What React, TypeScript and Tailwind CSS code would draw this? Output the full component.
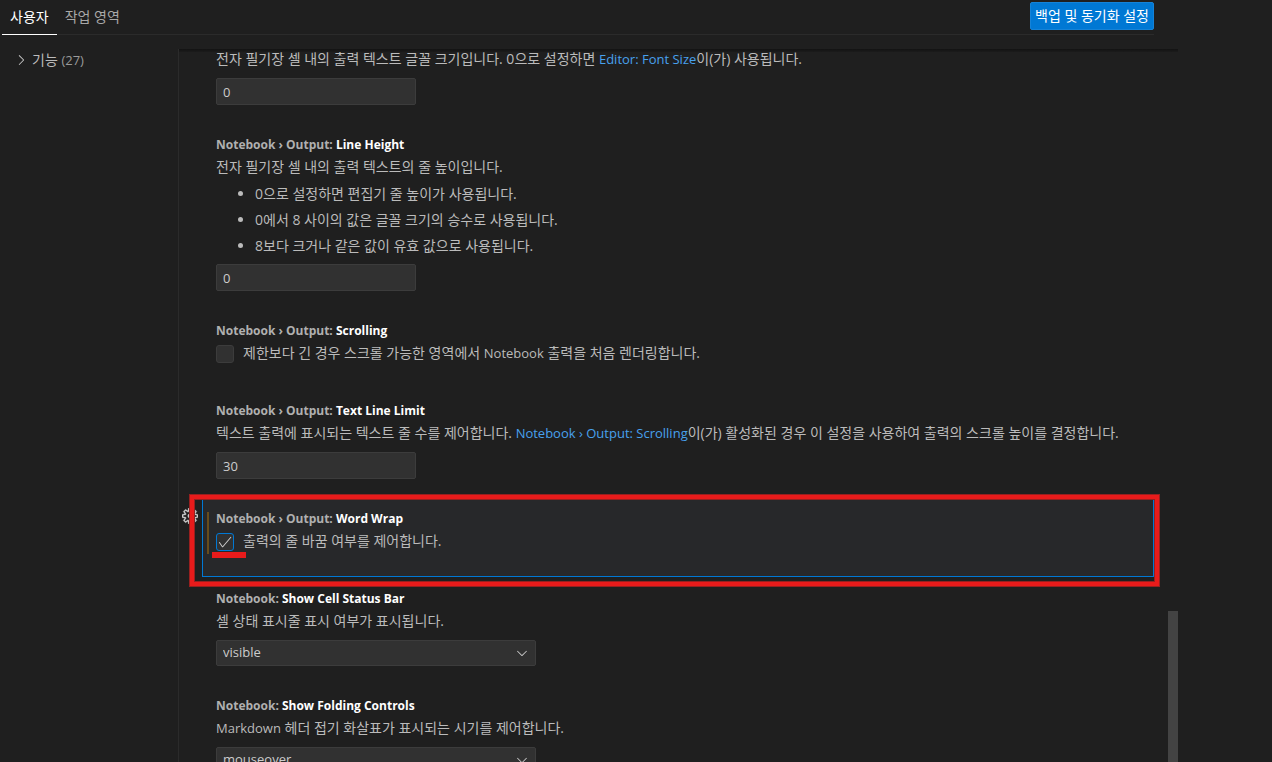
import type { ReactNode } from "react";
import { VscCheck, VscChevronDown, VscChevronRight, VscSettingsGear } from "react-icons/vsc";

type ItemProps = {
  id: string;
  category?: string;
  name?: string;
  children: ReactNode;
  focused?: boolean;
};

function Item({ id, category, name, children, focused }: ItemProps) {
  return (
    <section
      className={
        focused
          ? "relative mb-px bg-[#27282a] px-3.5 pt-3 pb-[18px] outline-1 -outline-offset-1 outline-[#0078d4]"
          : "relative mb-px px-3.5 pt-3 pb-[18px]"
      }
    >
      {focused && (
        <>
          <button
            type="button"
            aria-label="추가 작업"
            className="absolute top-2.5 -left-5 text-[#cccccc]"
          >
            <VscSettingsGear className="size-4" stroke="currentColor" strokeWidth={0.4} />
          </button>
          <span className="absolute top-3.5 left-[5px] h-[42px] w-0.5 bg-[#664c1c]" />
        </>
      )}
      <h2 className="text-[12px] leading-[18px] font-bold whitespace-pre text-[#b0b0b0]">
        <label htmlFor={id}>
          {category} <span className="text-white">{name}</span>
        </label>
      </h2>
      {children}
      {focused && (
        <>
          <span className="pointer-events-none absolute -top-[3px] -right-[5px] -bottom-[9px] -left-3 border-4 border-[#e81b1b] shadow-[0_0_0_1px_#97201f,inset_0_0_0_1px_#97201f]" />
          <span className="absolute top-[54px] left-2.5 h-1.5 w-[34px] bg-[#e81b1b]" />
        </>
      )}
    </section>
  );
}

function Description({ children }: { children: ReactNode }) {
  return <p className="mt-1 text-[14px] leading-[18px]">{children}</p>;
}

function SettingLink({ children }: { children: ReactNode }) {
  return (
    <a href="#" className="text-[13px] text-[#48a1ee]">
      {children}
    </a>
  );
}

function NumberBox({ id, value }: { id: string; value: string }) {
  return (
    <input
      id={id}
      type="text"
      aria-label={id}
      defaultValue={value}
      className="mt-2.5 block h-[27px] w-[200px] rounded-xs border border-[#3c3c3c] bg-[#313131] px-1.5 text-[13px] text-[#cccccc] outline-none"
    />
  );
}

function CheckRow({ id, checked, children }: { id: string; checked?: boolean; children: ReactNode }) {
  return (
    <div className="mt-1 mb-[9px] flex h-[18px] gap-[9px]">
      <span className="mt-px grid size-[18px] shrink-0">
        <input
          id={id}
          type="checkbox"
          defaultChecked={checked}
          className="col-start-1 row-start-1 size-[18px] appearance-none rounded-[3px] border border-[#3c3c3c] bg-[#313131] checked:border-[#0078d4]"
        />
        {checked && (
          <VscCheck className="pointer-events-none col-start-1 row-start-1 size-4 place-self-center text-[#cccccc]" />
        )}
      </span>
      <label htmlFor={id} className="text-[14px] leading-[18px]">
        {children}
      </label>
    </div>
  );
}

function SelectBox({ id, options }: { id: string; options: string[] }) {
  return (
    <div className="mt-2.5 grid w-[320px]">
      <select
        id={id}
        className="col-start-1 row-start-1 h-[26px] appearance-none rounded-xs border border-[#3c3c3c] bg-[#313131] px-1.5 text-[13px] text-[#cccccc] outline-none"
      >
        {options.map((o) => (
          <option key={o}>{o}</option>
        ))}
      </select>
      <VscChevronDown className="pointer-events-none col-start-1 row-start-1 mr-1.5 size-4 self-center justify-self-end text-[#cccccc]" />
    </div>
  );
}

export default function App() {
  return (
    <div className="h-screen overflow-hidden bg-[#1f1f1f] font-['Open_Sans','Noto_Sans_CJK_KR',sans-serif] text-[#bbbbbb]">
      <div className="flex h-full max-w-[1178px] flex-col">
        <header className="mr-6 ml-0.5 flex h-[35px] shrink-0 items-start justify-between border-b border-[#2b2b2b]">
          <nav className="flex text-[14px]">
            <button type="button" className="h-[35px] border-b border-white px-2 pb-0.5 text-white">
              사용자
            </button>
            <button type="button" className="h-[35px] border-b border-transparent px-2 pb-0.5 text-[#a8a8a8]">
              작업 영역
            </button>
          </nav>
          <button
            type="button"
            className="mt-0.5 h-7 rounded-xs border border-[#1583d8] bg-[#0078d4] px-1 pb-0.5 text-[14px] text-white"
          >
            백업 및 동기화 설정
          </button>
        </header>

        <div className="mt-3.5 flex min-h-0 flex-1">
          <aside className="w-[178px] shrink-0">
            <button type="button" className="flex h-[22px] items-center gap-[3px] pl-[13px] text-[14px]">
              <VscChevronRight className="size-4 text-[#cccccc]" />
              <span>
                기능 <span className="text-[13px] text-[#9a9a9a]">(27)</span>
              </span>
            </button>
          </aside>

          <main className="relative flex-1 overflow-hidden border-l border-[#2b2b2b] pr-6 pl-[23px]">
            <div className="absolute inset-x-0 top-0 h-[3px] bg-linear-to-b from-[#131313] to-[#1b1b1b]" />
            <section className="relative mb-px px-3.5 pb-[18px]">
              <p className="pt-px text-[14px] leading-[18px]">
                전자 필기장 셀 내의 출력 텍스트 글꼴 크기입니다. 0으로 설정하면{" "}
                <SettingLink>Editor: Font Size</SettingLink>이(가) 사용됩니다.
              </p>
              <NumberBox id="font-size" value="0" />
            </section>

            <Item id="line-height" category="Notebook › Output:" name="Line Height">
              <Description>전자 필기장 셀 내의 출력 텍스트의 줄 높이입니다.</Description>
              <ul className="mt-[9px] -mb-px flex list-disc flex-col gap-2 pl-[39px] text-[14px] leading-[18px]">
                <li>0으로 설정하면 편집기 줄 높이가 사용됩니다.</li>
                <li>0에서 8 사이의 값은 글꼴 크기의 승수로 사용됩니다.</li>
                <li>8보다 크거나 같은 값이 유효 값으로 사용됩니다.</li>
              </ul>
              <NumberBox id="line-height" value="0" />
            </Item>

            <Item id="scrolling" category="Notebook › Output:" name="Scrolling">
              <CheckRow id="scrolling">
                제한보다 긴 경우 스크롤 가능한 영역에서 <span className="text-[13px]">Notebook</span> 출력을 처음 렌더링합니다.
              </CheckRow>
            </Item>

            <Item id="text-line-limit" category="Notebook › Output:" name="Text Line Limit">
              <Description>
                텍스트 출력에 표시되는 텍스트 줄 수를 제어합니다.{" "}
                <SettingLink>Notebook › Output: Scrolling</SettingLink>이(가) 활성화된 경우 이 설정을 사용하여 출력의 스크롤 높이를 결정합니다.
              </Description>
              <NumberBox id="text-line-limit" value="30" />
            </Item>

            <Item id="word-wrap" category="Notebook › Output:" name="Word Wrap" focused>
              <CheckRow id="word-wrap" checked>
                출력의 줄 바꿈 여부를 제어합니다.
              </CheckRow>
            </Item>

            <Item id="status-bar" category="Notebook:" name="Show Cell Status Bar">
              <Description>셀 상태 표시줄 표시 여부가 표시됩니다.</Description>
              <SelectBox id="status-bar" options={["visible", "hidden", "visibleAfterExecute"]} />
            </Item>

            <Item id="folding" category="Notebook:" name="Show Folding Controls">
              <Description>
                <span className="text-[13px]">Markdown</span> 헤더 접기 화살표가 표시되는 시기를 제어합니다.
              </Description>
              <SelectBox id="folding" options={["mouseover", "always", "never"]} />
            </Item>

            <div className="absolute top-[562px] right-0 bottom-0 w-2.5 bg-[#434343]" />
          </main>
        </div>
      </div>
    </div>
  );
}
